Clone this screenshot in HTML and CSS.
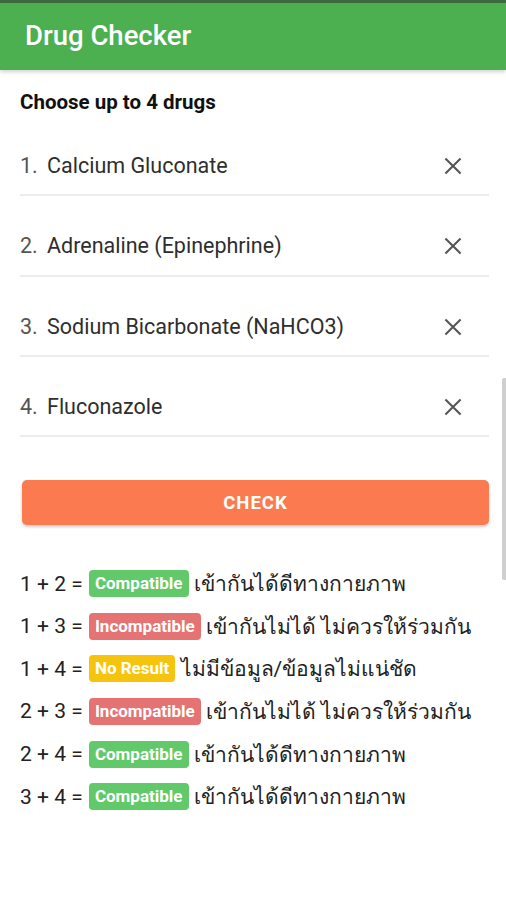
FILE: index.html
```html
<!DOCTYPE html>
<html>
<head>
<meta name="viewport" content="width=device-width, initial-scale=1">
<link rel="stylesheet" href="styles.css">
</head>
<body>
  <!-- Status strip and app bar -->
  <div class="statusbar"></div>
  <header class="appbar">
    <h1>Drug Checker</h1>
  </header>

  <main class="content">
    <h2 class="pick-title">Choose up to 4 drugs</h2>

    <!-- Selected drugs -->
    <ul class="drug-list">
      <li class="drug-row">
        <span class="drug-num">1.</span>
        <span class="drug-name">Calcium Gluconate</span>
        <svg class="remove" viewBox="0 0 24 24"><path d="M5 5 L19 19 M19 5 L5 19"/></svg>
      </li>
      <li class="drug-row">
        <span class="drug-num">2.</span>
        <span class="drug-name">Adrenaline (Epinephrine)</span>
        <svg class="remove" viewBox="0 0 24 24"><path d="M5 5 L19 19 M19 5 L5 19"/></svg>
      </li>
      <li class="drug-row">
        <span class="drug-num">3.</span>
        <span class="drug-name">Sodium Bicarbonate (NaHCO3)</span>
        <svg class="remove" viewBox="0 0 24 24"><path d="M5 5 L19 19 M19 5 L5 19"/></svg>
      </li>
      <li class="drug-row">
        <span class="drug-num">4.</span>
        <span class="drug-name">Fluconazole</span>
        <svg class="remove" viewBox="0 0 24 24"><path d="M5 5 L19 19 M19 5 L5 19"/></svg>
      </li>
    </ul>

    <button class="check-btn">CHECK</button>

    <!-- Pair results -->
    <div class="results">
      <div class="result">1 + 2 = <span class="badge ok">Compatible</span> เข้ากันได้ดีทางกายภาพ</div>
      <div class="result">1 + 3 = <span class="badge bad">Incompatible</span> เข้ากันไม่ได้ ไม่ควรให้ร่วมกัน</div>
      <div class="result">1 + 4 = <span class="badge none">No Result</span> ไม่มีข้อมูล/ข้อมูลไม่แน่ชัด</div>
      <div class="result">2 + 3 = <span class="badge bad">Incompatible</span> เข้ากันไม่ได้ ไม่ควรให้ร่วมกัน</div>
      <div class="result">2 + 4 = <span class="badge ok">Compatible</span> เข้ากันได้ดีทางกายภาพ</div>
      <div class="result">3 + 4 = <span class="badge ok">Compatible</span> เข้ากันได้ดีทางกายภาพ</div>
    </div>
  </main>

  <div class="scrollthumb"></div>
</body>
</html>
```

FILE: styles.css
```css
/* Page base */
body {
  margin: 0;
  font-family: Roboto, "Noto Sans", sans-serif;
  background-color: #fff;
  color: #222;
  position: relative;
  min-height: 900px;
  overflow: hidden;
}

/* Thin dark strip above the app bar */
.statusbar {
  height: 3px;
  background-color: #3d6b40;
}

/* Green app bar */
.appbar {
  height: 67px;
  background-color: #4caf50;
  display: flex;
  align-items: center;
  padding-left: 25px;
  box-shadow: 0 2px 4px rgba(0, 0, 0, 0.18);
}

.appbar h1 {
  margin: 0 0 2px 0;
  font-size: 27.5px;
  font-weight: 500;
  color: #fff;
}

.content {
  padding: 0 17px 0 20px;
}

.pick-title {
  margin: 0;
  padding-top: 20px;
  font-size: 20.5px;
  line-height: 24px;
  font-weight: 700;
  color: #111;
}

/* Drug rows */
.drug-list {
  list-style: none;
  margin: 2px 0 0 0;
  padding: 0;
}

.drug-row {
  box-sizing: border-box;
  display: flex;
  align-items: center;
  height: 80.3px;
  padding-top: 22px;
  border-bottom: 2px solid #ececec;
  font-size: 21.5px;
  line-height: 24px;
  color: #333;
}

.drug-num {
  color: #555;
  width: 27px;
}

.drug-name {
  flex: 1;
  color: #2e2e2e;
}

.remove {
  width: 26px;
  height: 26px;
  margin-right: 23px;
  fill: none;
  stroke: #555;
  stroke-width: 1.9;
}

/* Orange check button */
.check-btn {
  display: block;
  width: calc(100% - 2px);
  margin: 43px 0 0 2px;
  height: 45px;
  border: none;
  border-radius: 5px;
  background-color: #fb7a50;
  color: #fff;
  font-family: Roboto, "Noto Sans", sans-serif;
  font-size: 18.5px;
  font-weight: 700;
  letter-spacing: 1px;
  box-shadow: 0 2px 3px rgba(0, 0, 0, 0.2);
}

/* Result lines */
.results {
  margin-top: 44px;
  display: flex;
  flex-direction: column;
  gap: 13.6px;
}

.result {
  display: flex;
  align-items: center;
  font-size: 21px;
  color: #222;
  height: 29px;
  white-space: pre;
}

.badge {
  display: inline-block;
  padding: 3px 6px;
  margin-left: 1px;
  border-radius: 4px;
  font-size: 17px;
  font-weight: 700;
  color: #fff;
  line-height: 21px;
}

.badge.ok {
  background-color: #62c96a;
}

.badge.bad {
  background-color: #e57373;
}

.badge.none {
  background-color: #f6c40f;
}

/* Scroll indicator on the right edge */
.scrollthumb {
  position: absolute;
  right: 0;
  top: 378px;
  width: 4px;
  height: 202px;
  border-radius: 2px 0 0 2px;
  background-color: #cfcfcf;
}
```
